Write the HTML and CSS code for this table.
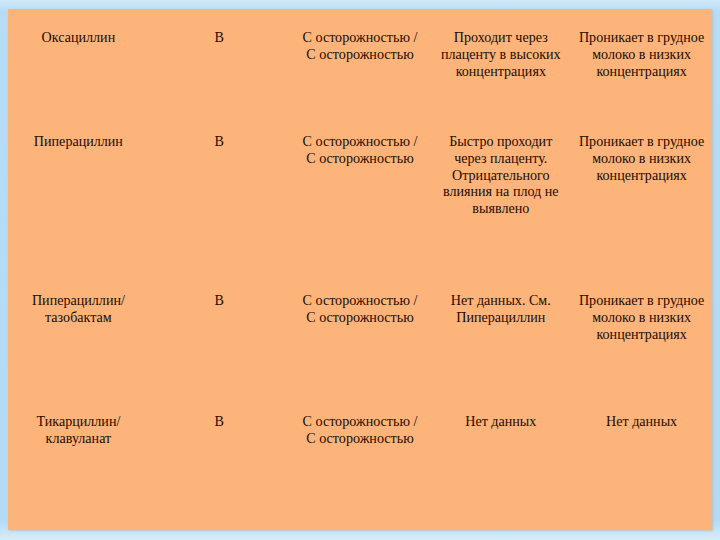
FILE: index.html
```html
<!DOCTYPE html>
<html lang="ru">
<head>
<meta charset="utf-8">
<link rel="stylesheet" href="styles.css">
<title>Таблица</title>
</head>
<body>
<div class="panel">
  <div class="row r1">
    <div class="cell">Оксациллин</div>
    <div class="cell">В</div>
    <div class="cell">С осторожностью /<br>С осторожностью</div>
    <div class="cell">Проходит через плаценту в высоких концентрациях</div>
    <div class="cell">Проникает в грудное молоко в низких концентрациях</div>
  </div>
  <div class="row r2">
    <div class="cell">Пиперациллин</div>
    <div class="cell">В</div>
    <div class="cell">С осторожностью /<br>С осторожностью</div>
    <div class="cell narrow">Быстро проходит через плаценту. Отрицательного влияния на плод не выявлено</div>
    <div class="cell">Проникает в грудное молоко в низких концентрациях</div>
  </div>
  <div class="row r3">
    <div class="cell">Пиперациллин/<br>тазобактам</div>
    <div class="cell">В</div>
    <div class="cell">С осторожностью /<br>С осторожностью</div>
    <div class="cell">Нет данных. См. Пиперациллин</div>
    <div class="cell">Проникает в грудное молоко в низких концентрациях</div>
  </div>
  <div class="row r4">
    <div class="cell">Тикарциллин/<br>клавуланат</div>
    <div class="cell">В</div>
    <div class="cell">С осторожностью /<br>С осторожностью</div>
    <div class="cell">Нет данных</div>
    <div class="cell">Нет данных</div>
  </div>
</div>
</body>
</html>
```
FILE: styles.css
```css
html, body {
  margin: 0;
  padding: 0;
}
body {
  width: 720px;
  height: 540px;
  background: linear-gradient(180deg, #cfe9f9 0px, #b6dcf6 12px, #b4dbf6 520px, #d6eef9 540px);
  font-family: "Liberation Serif", "Times New Roman", serif;
  color: #1c0c02;
  padding: 9px 8px 0 8px;
  box-sizing: border-box;
  overflow: hidden;
}
.panel {
  width: 704px;
  height: 521px;
  background: #fdb47b;
  display: grid;
  grid-template-rows: 104px 159px 121px 1fr;
  box-shadow: 1px 1px 2px rgba(200, 160, 140, 0.5);
}
.row {
  display: grid;
  grid-template-columns: repeat(5, 1fr);
}
.cell {
  padding: 20px 4px 0 4px;
  font-size: 14.1px;
  line-height: 16.8px;
  text-align: center;
}
.cell.narrow {
  padding-left: 12px;
  padding-right: 12px;
}
```
